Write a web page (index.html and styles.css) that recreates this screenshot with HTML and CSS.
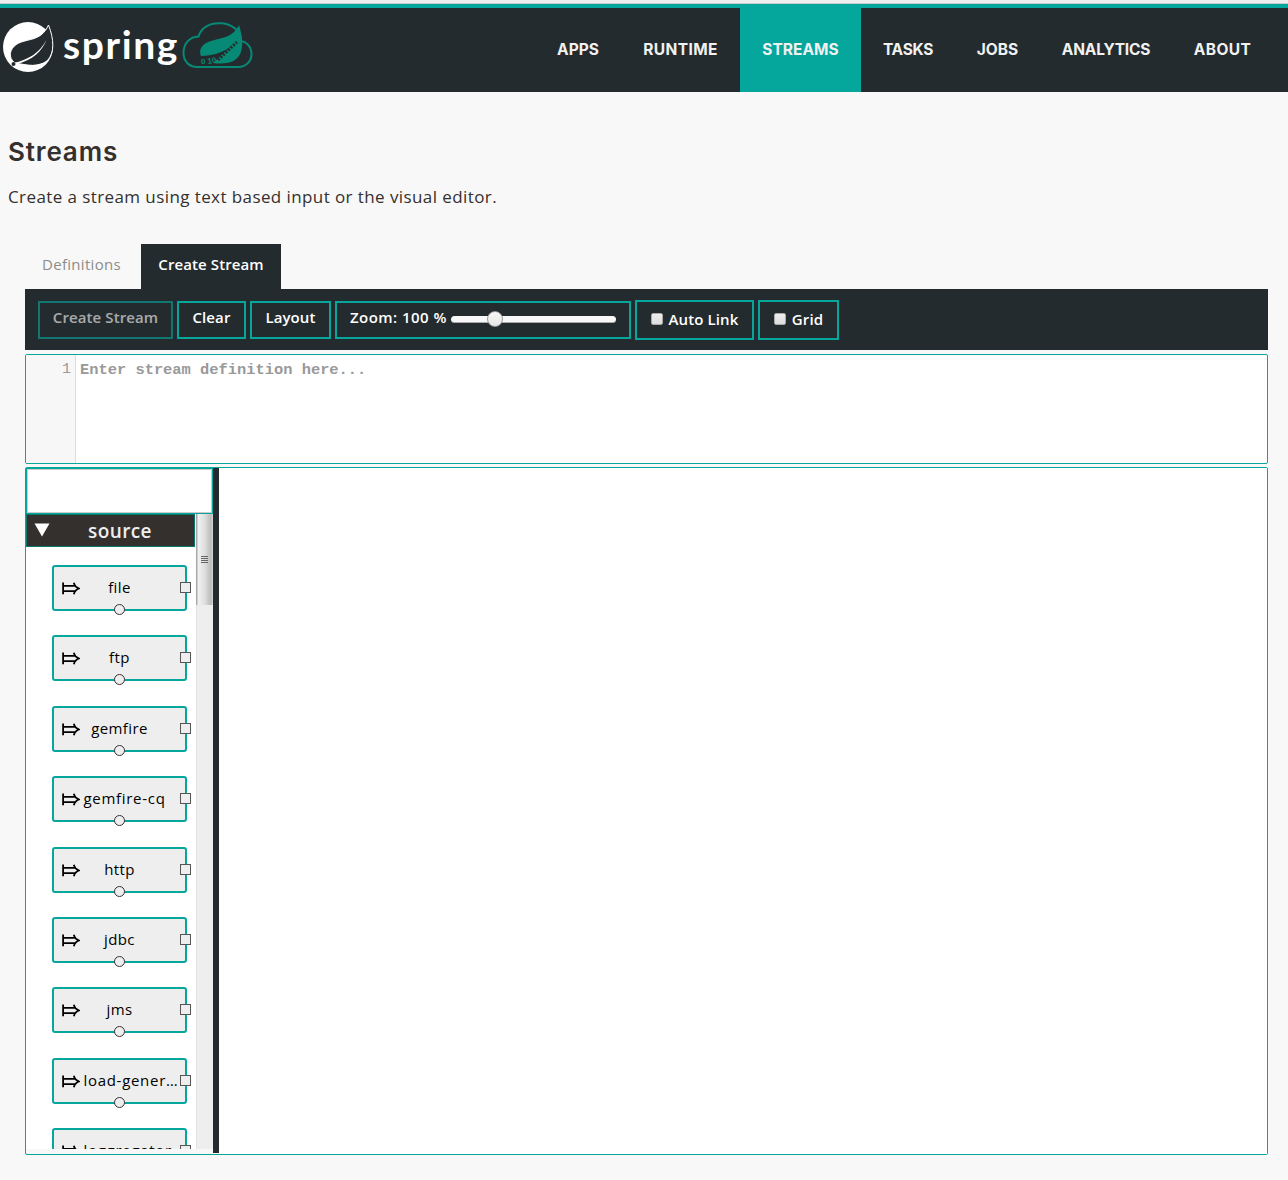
FILE: index.html
```html
<!DOCTYPE html>
<html lang="en">
<head>
<meta charset="utf-8">
<title>Streams</title>
<link rel="stylesheet" href="styles.css">
</head>
<body>
<svg class="defs" width="0" height="0" aria-hidden="true">
  <symbol id="source-arrow" viewBox="0 0 18 13">
    <path d="M1.1 0.5V12.3M1.1 3.8H14M1.1 9.2H14M11.8 0.8C12.6 3.8 14.400 5.600 17 6.500C14.400 7.400 12.600 9.200 11.800 12.200" fill="none" stroke="#000" stroke-width="1.8"/>
  </symbol>
</svg>
<header class="topbar">
  <a class="brand">
    <svg class="leaf" width="52" height="52" viewBox="0 0 52 52">
      <circle cx="25" cy="25" r="25" fill="#fff"/>
      <path d="M45.500 3C51 17 52 31 44 39C36 46 24 43 12 41C5 36 6 27 14 22C24 16 38 20 45.500 3Z" fill="#242b2e" stroke="#fff" stroke-width="1"/>
      <path d="M10 41C26 38 37 30 43.500 18C39 29 30 38 13 42.500Z" fill="#fff"/>
      <path d="M14 43C26 43.500 37 44 44.500 38C37 47 24 49 14 43Z" fill="#fff"/>
      <circle cx="10.500" cy="42" r="2" fill="#242b2e"/>
    </svg>
    <span class="wordmark">spring</span>
    <svg class="cloud" width="72" height="50" viewBox="0 0 72 50">
      <path d="M15 45H56C65 45 70 38 69.500 31C69 24 64 19.500 59 19C59 8 49 1.500 38 1.300C27 1 19 6 16.500 14.500C7 15 1.500 22 1.500 31C1.500 39 7 45 15 45Z" fill="none" stroke="#068975" stroke-width="2"/>
      <path d="M57 3C61 16 63 31 53 38C47 42 38 42 31 41L55 19C46 29 32 34 19 34C16 27 21 21 29 19C38 16 51 16 57 3Z" fill="#068975"/>
      <g class="bits"><text x="19" y="42">0</text><text transform="translate(26 42) rotate(-10)">1</text><text transform="translate(31 41.500) rotate(-20)">0</text></g>
      <path d="M36 38L55 20" fill="none" stroke="#242b2e" stroke-width="3" stroke-dasharray="2 1.500"/>
    </svg>
  </a>
  <nav class="menu">
    <a class="apps"><span>APPS</span></a>
    <a class="runtime"><span>RUNTIME</span></a>
    <a class="streams active"><span>STREAMS</span></a>
    <a class="tasks"><span>TASKS</span></a>
    <a class="jobs"><span>JOBS</span></a>
    <a class="analytics"><span>ANALYTICS</span></a>
    <a class="about"><span>ABOUT</span></a>
  </nav>
</header>
<main>
  <h1>Streams</h1>
  <p class="intro">Create a stream using text based input or the visual editor.</p>
  <div class="workspace">
    <div class="tabs"><a class="tab">Definitions</a><a class="tab selected">Create Stream</a></div>
    <div class="toolbar">
      <button class="btn create" disabled>Create Stream</button>
      <button class="btn clear">Clear</button>
      <button class="btn layout">Layout</button>
      <div class="btn zoom"><span class="zoom-label">Zoom: 100 %</span><span class="track"><span class="knob"></span></span></div>
      <label class="btn tall auto"><span class="check"></span><span>Auto Link</span></label>
      <label class="btn tall grid"><span class="check"></span><span>Grid</span></label>
    </div>
    <div class="editor"><div class="gutter">1</div><div class="code">Enter stream definition here...</div></div>
    <div class="designer">
      <aside class="palette">
        <div class="filter"></div>
        <div class="scroller">
          <div class="list">
            <div class="group"><svg width="16" height="14" viewBox="0 0 16 14"><path d="M0.500 0.500H15.500L8 13.500Z" fill="#fff"/></svg><span>source</span></div>
            <div class="node"><svg class="arrow"><use href="#source-arrow"/></svg><span>file</span><i class="out"></i><i class="tap"></i></div>
            <div class="node"><svg class="arrow"><use href="#source-arrow"/></svg><span>ftp</span><i class="out"></i><i class="tap"></i></div>
            <div class="node"><svg class="arrow"><use href="#source-arrow"/></svg><span>gemfire</span><i class="out"></i><i class="tap"></i></div>
            <div class="node"><svg class="arrow"><use href="#source-arrow"/></svg><span class="wide">gemfire-cq</span><i class="out"></i><i class="tap"></i></div>
            <div class="node"><svg class="arrow"><use href="#source-arrow"/></svg><span>http</span><i class="out"></i><i class="tap"></i></div>
            <div class="node"><svg class="arrow"><use href="#source-arrow"/></svg><span>jdbc</span><i class="out"></i><i class="tap"></i></div>
            <div class="node"><svg class="arrow"><use href="#source-arrow"/></svg><span>jms</span><i class="out"></i><i class="tap"></i></div>
            <div class="node"><svg class="arrow"><use href="#source-arrow"/></svg><span class="wide">load-gener…</span><i class="out"></i><i class="tap"></i></div>
            <div class="node"><svg class="arrow"><use href="#source-arrow"/></svg><span class="wide">loggregator</span><i class="out"></i><i class="tap"></i></div>
          </div>
          <div class="scrollbar"><div class="thumb"><i></i><i></i><i></i><i></i></div></div>
        </div>
      </aside>
      <div class="splitter"></div>
      <div class="canvas"></div>
    </div>
  </div>
</main>
</body>
</html>
```
FILE: styles.css
```css
* { box-sizing: border-box; }
body { margin: 0; height: 1180px; overflow: hidden; background: #f8f8f8; color: #34302d; font: 16px "Open Sans", "Noto Sans", sans-serif; border-top: 3px solid #efefef; }
.defs { position: absolute; }
.topbar { height: 89px; border-top: 1px solid #c9cccc; background: linear-gradient(#05a79d 4px, #242b2e 4px); display: flex; justify-content: space-between; padding-right: 15px; }
.brand { display: flex; padding: 18px 0 0 3px; color: #fff; }
.leaf { display: block; flex: none; }
.wordmark { width: 128px; padding-left: 8px; font: 700 39px/44px Lato, sans-serif; letter-spacing: 1.6px; }
.cloud { margin-left: -1px; }
.bits { fill: #068975; font: bold 8px "Liberation Sans", sans-serif; }
.menu { display: flex; color: #f1f1f1; font: 700 15.5px/20px Inter, sans-serif; }
.menu a { display: flex; justify-content: center; padding-top: 36px; letter-spacing: 0; }
.menu .active { background: #05a79d; }
.apps { width: 86px; }
.menu .runtime { width: 119px; letter-spacing: .4px; }
.streams { width: 121px; }
.menu .tasks { width: 94px; letter-spacing: -.3px; }
.jobs { width: 85px; }
.menu .analytics { width: 132px; letter-spacing: -.2px; }
.menu .about { width: 101px; letter-spacing: .4px; }
main { padding: 41px 20px 0 8px; }
h1 { margin: 0; font: 600 26px/38px Inter, sans-serif; letter-spacing: .85px; }
.intro { margin: 13px 0 0; font-size: 17px; font-weight: 500; line-height: 26px; letter-spacing: .41px; white-space: nowrap; }
.workspace { margin: 34px 0 0 17px; }
.tabs { display: flex; height: 45px; font-size: 15px; line-height: 40px; text-align: center; }
.tab { width: 116px; color: #8c8c8a; padding-right: 3px; font-weight: 500; letter-spacing: .3px; }
.selected { width: 140px; padding: 0; background: #242b2e; color: #fff; font-weight: 600; letter-spacing: .1px; }
.toolbar { height: 61px; padding: 0 13px; background: #242b2e; display: flex; align-items: center; gap: 4px; }
.btn { height: 38px; padding: 0 0 6px; border: 2px solid #05a79d; background: none; color: #fff; font: 600 15px/28px "Open Sans", sans-serif; letter-spacing: .1px; display: flex; align-items: center; justify-content: center; white-space: nowrap; }
.create { width: 135px; opacity: .6; }
.clear { width: 69px; }
.layout { width: 81px; }
.zoom { width: 296px; justify-content: flex-start; padding-left: 13px; }
.zoom-label { width: 101px; letter-spacing: .45px; }
.track { width: 165px; height: 7px; margin-top: 6px; border-radius: 4px; background: #f8f8f8; border-bottom: 1px solid #aaa; position: relative; }
.knob { position: absolute; left: 36px; top: -5px; width: 16px; height: 16px; border-radius: 50%; border: 1px solid #999; background: linear-gradient(#f8f8f8, #e5e5e5); }
.tall { height: 40px; padding: 0 0 2px; gap: 6px; }
.auto { width: 119px; }
.grid { width: 81px; }
.check { width: 12px; height: 12px; border: 1px solid #aaa; border-radius: 2px; background: linear-gradient(#eee, #ddd); }
.editor { height: 110px; margin-top: 4px; border: 1px solid #05a79d; border-radius: 2px; background: #fff; display: flex; font: 15px/20px "Liberation Mono", monospace; color: #999; padding: 0; }
.gutter { width: 50px; border-right: 1px solid #ddd; background: #f7f7f7; padding: 5px 4px 0 0; text-align: right; }
.code { padding: 5px 4px; font-weight: 700; font-size: 15.4px; }
.designer { height: 688px; margin-top: 3px; border: 1px solid #05a79d; border-radius: 2px; display: flex; }
.palette { width: 187px; height: 681px; background: #fff; }
.filter { height: 46px; border: 1px solid #05a79d; box-shadow: inset 0 0 0 1px #ccc; }
.scroller { height: 635px; display: flex; justify-content: space-between; overflow: hidden; }
.list { width: 169px; }
.group { height: 33px; border: 1px solid #08786e; background: #34302d; color: #eee; display: flex; align-items: center; margin-bottom: 18px; }
.group svg { margin-left: 7px; margin-top: -2px; flex: none; }
.group span { width: 140px; text-align: center; font-size: 19px; font-weight: 600; line-height: 30px; letter-spacing: .4px; }
.node { position: relative; width: 135px; height: 46px; margin: 0 0 24.4px 26px; border: 2px solid #05a79d; border-radius: 3px; background: #eee; color: #000; }
.arrow { position: absolute; left: 8px; top: 15px; width: 18px; height: 13px; }
.node span { display: block; text-align: center; font-size: 15px; font-weight: 500; line-height: 41px; letter-spacing: .4px; white-space: nowrap; }
.node .wide { text-align: left; padding-left: 29.5px; letter-spacing: .7px; }
.out { position: absolute; right: -6px; top: 15px; width: 11px; height: 11px; border: 1px solid #555; background: #eee; }
.tap { position: absolute; left: 60px; bottom: -6px; width: 11px; height: 11px; border: 1px solid #333; border-radius: 50%; background: #eee; }
.scrollbar { width: 17px; background: #eee; border-left: 1px solid #e2e2e2; }
.thumb { height: 91px; margin-left: -1px; background: linear-gradient(90deg, #aaa 1px, #f2f2f2 2px, #ddd 9px, #bbb 15px, #d8d8d8); display: flex; flex-direction: column; align-items: center; justify-content: center; gap: 1px; }
.thumb i { width: 7px; height: 1px; background: #666; }
.splitter { width: 6px; height: 685px; background: #242b2e; }
.canvas { flex: 1; background: #fff; }
```
